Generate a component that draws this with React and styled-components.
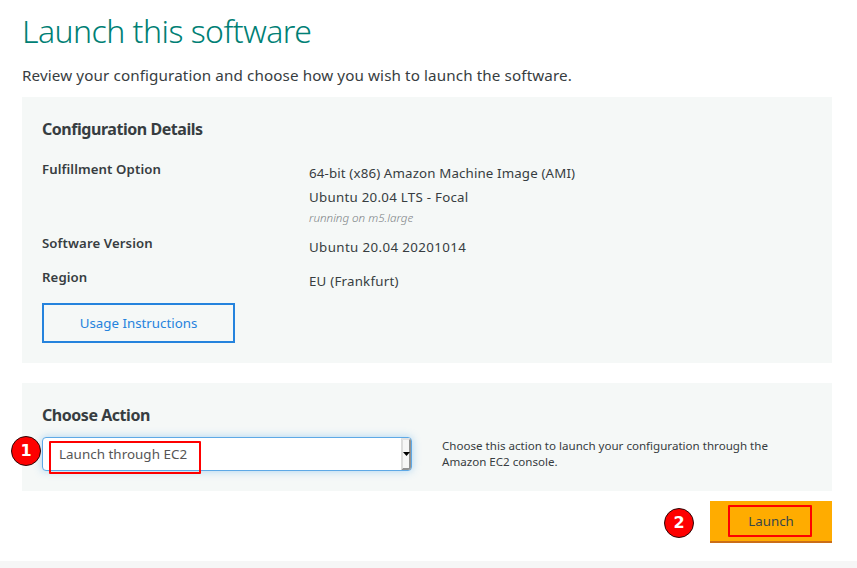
import React from "react";
import styled, { createGlobalStyle } from "styled-components";

const GlobalStyle = createGlobalStyle`
  * { box-sizing: border-box; }
  body {
    margin: 0;
    background: #fff;
    color: #373d41;
    font-family: "Noto Sans", "Open Sans", sans-serif;
    font-size: 13.3px;
    overflow: hidden;
  }
`;

const Page = styled.main`
  display: flex;
  flex-direction: column;
  height: 568px;
  padding: 11px 25px 0 22px;
`;

const Title = styled.h1`
  margin: 0 0 14px;
  font-size: 32px;
  font-weight: 300;
  line-height: 40px;
  letter-spacing: -0.54px;
  color: #007f75;
`;

const Intro = styled.p`
  margin: 0 0 12px;
  font-size: 15.2px;
  line-height: 20px;
  letter-spacing: 0.12px;
`;

const Panel = styled.section`
  height: ${(p) => p.$height}px;
  padding: 22px 20px 0;
  margin-bottom: ${(p) => p.$gap}px;
  background: #f5f8f7;
`;

const PanelTitle = styled.h2`
  margin: 0 0 ${(p) => p.$gap}px;
  font-size: 16px;
  font-weight: 700;
  line-height: 20px;
  letter-spacing: -0.46px;
`;

const Details = styled.dl`
  display: grid;
  grid-template-columns: 267px 1fr;
  row-gap: 10px;
  margin: 0 0 10px;
`;

const Label = styled.dt`
  font-size: 13.2px;
  font-weight: 600;
  line-height: 16px;
  letter-spacing: 0.1px;
`;

const Value = styled.dd`
  margin: 0;
  line-height: 24px;
  letter-spacing: ${(p) => p.$spacing || 0}px;
`;

const ValueLine = styled.div`
  letter-spacing: ${(p) => p.$spacing || 0}px;
`;

const Note = styled.div`
  height: 16px;
  font-size: 11.6px;
  font-style: italic;
  font-weight: 300;
  line-height: 18px;
  color: #7b8184;
`;

const OutlineButton = styled.button`
  width: 193px;
  height: 40px;
  padding: 0;
  border: 2px solid #2583dd;
  background: transparent;
  color: #2583dd;
  font: inherit;
`;

const ActionRow = styled.div`
  display: flex;
  gap: 30px;
`;

const SelectBox = styled.div`
  position: relative;
  display: flex;
  justify-content: space-between;
  width: 370px;
  height: 34px;
  padding-left: 16px;
  border: 1px solid #5ea9e6;
  border-radius: 4px;
  background: #fff;
  box-shadow: 0 0 8px rgba(82, 168, 236, 0.45);
  color: #555;
  font-size: 13.4px;
  line-height: 32px;
  letter-spacing: 0.03px;
`;

const Arrow = styled.span`
  display: flex;
  align-items: center;
  justify-content: center;
  width: 10px;
  height: 32px;
  border: 2px solid;
  border-color: #e3e3e3 #929292 #929292 #dcdcdc;
  border-radius: 0 3px 3px 0;
  background: #f6f6f6;

  svg { flex: none; }
`;

const Description = styled.p`
  width: 350px;
  margin: 1px 0 0;
  font-size: 11.58px;
  line-height: 16px;
`;

const Footer = styled.footer`
  display: flex;
  justify-content: flex-end;
  height: 42px;
  margin-bottom: 18px;
`;

const LaunchButton = styled.button`
  position: relative;
  width: 122px;
  height: 42px;
  padding: 0;
  border: 0;
  border-bottom: 2px solid #cb6e17;
  background: #ffac00;
  color: #37474a;
  font: inherit;
`;

const Highlight = styled.span`
  position: absolute;
  left: ${(p) => p.$left}px;
  top: ${(p) => p.$top}px;
  width: ${(p) => p.$width}px;
  height: ${(p) => p.$height}px;
  border: 2px solid #fe0000;
  border-radius: 1px;
`;

const Step = styled.span`
  position: absolute;
  left: ${(p) => p.$left}px;
  top: ${(p) => p.$top}px;
  width: 30px;
  height: 30px;
  border: 1px solid #2a0808;
  border-radius: 50%;
  background: #fe0000;
  color: #fff;
  font: bold 16px/28px "DejaVu Sans", sans-serif;
  text-align: center;
`;

const BottomStrip = styled.div`
  height: 7px;
  margin: 0 -25px 0 -22px;
  background: #f6f6f6;
`;

export default function App() {
  return (
    <>
      <GlobalStyle />
      <Page>
        <Title>Launch this software</Title>
        <Intro>Review your configuration and choose how you wish to launch the software.</Intro>
        <Panel $height={266} $gap={20}>
          <PanelTitle $gap={22}>Configuration Details</PanelTitle>
          <Details>
            <Label>Fulfillment Option</Label>
            <Value>
              <ValueLine $spacing={0.14}>64-bit (x86) Amazon Machine Image (AMI)</ValueLine>
              <ValueLine $spacing={0.27}>Ubuntu 20.04 LTS - Focal</ValueLine>
              <Note>running on m5.large</Note>
            </Value>
            <Label>Software Version</Label>
            <Value $spacing={0.39}>Ubuntu 20.04 20201014</Value>
            <Label>Region</Label>
            <Value $spacing={0.22}>EU (Frankfurt)</Value>
          </Details>
          <OutlineButton>Usage Instructions</OutlineButton>
        </Panel>
        <Panel $height={108} $gap={10}>
          <PanelTitle $gap={12}>Choose Action</PanelTitle>
          <ActionRow>
            <SelectBox>
              Launch through EC2
              <Arrow>
                <svg width="7" height="4" viewBox="0 0 7 4">
                  <path d="M0 0h7L3.5 4z" fill="#000" />
                </svg>
              </Arrow>
              <Highlight $left={6} $top={3} $width={152} $height={33} />
              <Step $left={-32} $top={-2}>1</Step>
            </SelectBox>
            <Description>
              Choose this action to launch your configuration through the Amazon EC2 console.
            </Description>
          </ActionRow>
        </Panel>
        <Footer>
          <LaunchButton>
            Launch
            <Highlight $left={18} $top={4} $width={84} $height={32} />
            <Step $left={-46} $top={7}>2</Step>
          </LaunchButton>
        </Footer>
        <BottomStrip />
      </Page>
    </>
  );
}
